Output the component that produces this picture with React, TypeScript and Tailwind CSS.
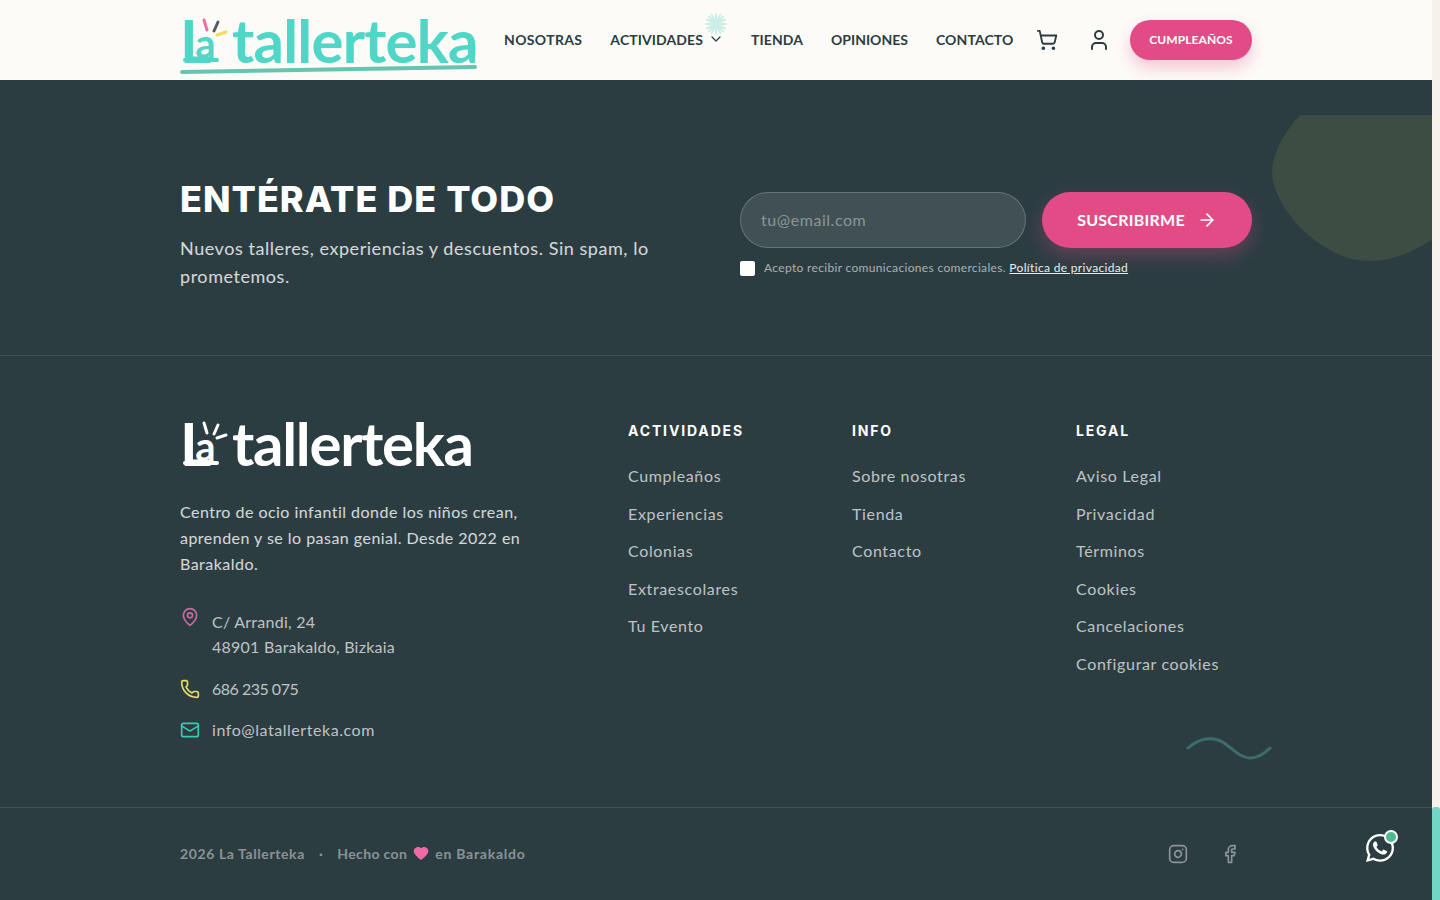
import { ArrowRight, ChevronDown, Facebook, Heart, Instagram, Mail, MapPin, Phone, ShoppingCart, User } from 'lucide-react'
import { FaWhatsapp } from 'react-icons/fa'

const navItems = ['NOSOTRAS', 'ACTIVIDADES', 'TIENDA', 'OPINIONES', 'CONTACTO']

const linkColumns = [
  { title: 'ACTIVIDADES', links: ['Cumpleaños', 'Experiencias', 'Colonias', 'Extraescolares', 'Tu Evento'] },
  { title: 'INFO', links: ['Sobre nosotras', 'Tienda', 'Contacto'] },
  { title: 'LEGAL', links: ['Aviso Legal', 'Privacidad', 'Términos', 'Cookies', 'Cancelaciones', 'Configurar cookies'] },
]

function Logo({ light }: { light?: boolean }) {
  const text = light ? 'text-white' : 'text-[#4fd6c6]'
  return (
    <div className={`relative flex h-[50px] w-[296px] items-start font-['Lato',sans-serif] font-bold ${text}`}>
      <span className="relative block h-[50px] w-[52px] shrink-0">
        <span className="mt-[-7px] flex items-baseline leading-[60px]">
          <span className="text-[60px] leading-[60px] tracking-[-17px]">L</span>
          <span className="relative top-[-5px] ml-[1px] text-[40px] leading-[40px]">a</span>
        </span>
        <span className={`absolute left-[3px] top-[41px] h-[4px] w-[36px] rounded-full ${light ? 'bg-white' : 'bg-[#4fd6c6]'}`} />
        <svg className="absolute left-0 top-0" width="52" height="24" viewBox="0 0 52 24" fill="none" strokeWidth="3" strokeLinecap="round">
          <path d="M24 3l3 10" stroke={light ? '#fff' : '#ee6fa5'} />
          <path d="M38 5l-4 9" stroke={light ? '#fff' : '#555e60'} />
          <path d="M37 18l9-3" stroke={light ? '#fff' : '#f3dc5d'} />
        </svg>
      </span>
      <span className={`mt-[-7px] text-[60px] leading-[60px] ${light ? 'tracking-[-1.3px]' : 'tracking-[-0.8px]'}`}>tallerteka</span>
      {!light && (
        <svg className="absolute left-0 top-[48px]" width="297" height="9" viewBox="0 0 297 9" fill="none">
          <path d="M2 7L295 2" stroke="#66c4b0" strokeWidth="4" strokeLinecap="round" />
        </svg>
      )}
    </div>
  )
}

export default function App() {
  return (
    <div className="flex h-[900px] w-full overflow-hidden bg-[#2c3d42] font-['Lato',sans-serif]">
      <div className="flex min-w-0 flex-1 flex-col">
        <header className="relative h-20 shrink-0 bg-[#fdfbf8]">
          <div className="mx-auto flex h-full w-[1072px] items-center">
            <div className="pt-[4px]">
              <Logo />
            </div>
            <nav className="ml-7 flex items-center gap-7 pb-[2px] text-[14px] font-bold tracking-[0.1px] text-[#2c3d42]">
              {navItems.map((item) => (
                <span key={item} className={`flex items-center ${item === 'NOSOTRAS' ? 'tracking-[0.35px]' : ''} ${item === 'OPINIONES' ? 'tracking-[0px]' : ''}`}>
                  {item}
                  {item === 'ACTIVIDADES' && <ChevronDown className="ml-[5px] mr-[-1px] h-4 w-4" strokeWidth={1.8} />}
                </span>
              ))}
            </nav>
            <ShoppingCart className="ml-[23px] h-[22px] w-[22px] text-[#2c3d42]" strokeWidth={2} />
            <User className="ml-[29px] h-6 w-6 text-[#2c3d42]" strokeWidth={2} />
            <button className="ml-auto h-10 w-[122px] rounded-full bg-[#e34b87] text-[12px] font-bold tracking-[0.1px] text-white shadow-[0_8px_16px_rgba(227,75,135,0.3)]">
              CUMPLEAÑOS
            </button>
          </div>
          <svg className="absolute left-[705px] top-[13px]" width="22" height="22" viewBox="0 0 22 22" stroke="#cdeee8" strokeWidth="2" strokeLinecap="round">
            <path d="M11 1v20M1 11h20M4 4l14 14M18 4L4 18M6.5 1.8l9 18.4M15.5 1.8l-9 18.4M1.8 6.5l18.4 9M20.2 6.5l-18.4 9" />
          </svg>
        </header>

        <div className="h-[35px] shrink-0" />

        <section className="relative shrink-0 overflow-hidden border-b border-white/10 py-16">
          <svg className="absolute right-0 top-0" width="160" height="146" viewBox="0 0 160 146">
            <path d="M28 0C10 20 0 40 0 58C2 95 50 146 98 146C125 146 150 132 160 124L160 0Z" fill="#3e4d44" />
          </svg>
          <div className="relative mx-auto grid w-[1072px] grid-cols-2 items-center gap-12">
            <div className="pb-[1px]">
              <h2 className="font-['Inter',sans-serif] text-[36px] font-extrabold leading-10 tracking-[1px] text-white">ENTÉRATE DE TODO</h2>
              <p className="mt-[15px] text-[18px] leading-7 tracking-[0.55px] text-white/80">
                Nuevos talleres, experiencias y descuentos. Sin spam, lo prometemos.
              </p>
            </div>
            <div className="pb-[1px]">
              <div className="flex gap-4">
                <div className="flex h-14 w-[286px] items-center rounded-full border border-white/20 bg-white/10 px-5 text-[16px] tracking-[0.55px] text-white/40">tu@email.com</div>
                <button className="flex h-14 w-[210px] items-center justify-center gap-3 rounded-full bg-[#e34b87] text-[16px] font-bold tracking-[0.25px] text-white shadow-[0_8px_18px_rgba(227,75,135,0.3)]">
                  SUSCRIBIRME
                  <ArrowRight className="h-5 w-5" strokeWidth={2} />
                </button>
              </div>
              <label className="mt-[11px] flex items-center gap-[9px] text-[12px] tracking-[0.33px] text-white/60">
                <span className="h-[15px] w-[15px] shrink-0 rounded-[2px] bg-white" />
                <span>
                  Acepto recibir comunicaciones comerciales. <span className="text-white/90 underline">Política de privacidad</span>
                </span>
              </label>
            </div>
          </div>
        </section>

        <section className="relative shrink-0 border-b border-white/10 pb-[65px] pt-16">
          <svg className="absolute right-[160px] top-[379px]" width="86" height="26" viewBox="0 0 86 26" fill="none">
            <path d="M2 13C12 4 22 2 32 5C44 9 50 22 64 23C72 23 78 19 84 13" stroke="#3c6d6b" strokeWidth="3" strokeLinecap="round" />
          </svg>
          <div className="mx-auto grid w-[1072px] grid-cols-5 gap-12">
            <div className="col-span-2">
              <Logo light />
              <p className="mt-[29px] text-[16px] leading-[26px] tracking-[0.47px] text-white/80">
                Centro de ocio infantil donde los niños crean, aprenden y se lo pasan genial. Desde 2022 en Barakaldo.
              </p>
              <div className="mt-[32px] flex flex-col gap-4 text-[16px] leading-[25px] text-white/70">
                <div className="mb-[1px] flex gap-3 tracking-[0.25px]">
                  <MapPin className="mt-[-2px] h-5 w-5 shrink-0 text-[#c76aa0]" strokeWidth={2} />
                  <span>
                    C/ Arrandi, 24
                    <br />
                    48901 Barakaldo, Bizkaia
                  </span>
                </div>
                <div className="flex items-center gap-3 tracking-[-0.5px]">
                  <Phone className="h-5 w-5 shrink-0 text-[#e8dc6c]" strokeWidth={2} />
                  <span>686 235 075</span>
                </div>
                <div className="flex items-center gap-3 tracking-[0.55px]">
                  <Mail className="h-5 w-5 shrink-0 text-[#3cc9b5]" strokeWidth={2} />
                  <span>info@latallerteka.com</span>
                </div>
              </div>
            </div>
            {linkColumns.map((column) => (
              <div key={column.title}>
                <h3 className="mb-[23px] mt-[1px] font-['Inter',sans-serif] text-[14px] font-bold leading-5 tracking-[1.85px] text-white">{column.title}</h3>
                <ul className="flex flex-col gap-[13.6px] text-[16px] leading-6 tracking-[0.65px] text-white/70">
                  {column.links.map((link) => (
                    <li key={link}>{link}</li>
                  ))}
                </ul>
              </div>
            ))}
          </div>
        </section>

        <div className="relative flex flex-1 items-center">
          <div className="mx-auto flex w-[1072px] items-center justify-between text-[14px] font-bold tracking-[0.6px] text-white/45">
            <div className="flex items-center pb-[2px]">
              <span>2026 La Tallerteka</span>
              <span className="mx-[14px]">·</span>
              <span className="tracking-[0.35px]">Hecho con</span>
              <Heart className="mx-[6px] h-4 w-4 fill-[#ef6aa6] text-[#ef6aa6]" />
              <span className="tracking-[0.75px]">en Barakaldo</span>
            </div>
            <div className="flex items-center gap-[32px] pr-[12px]">
              <Instagram className="h-5 w-5" strokeWidth={2} />
              <Facebook className="h-5 w-5" strokeWidth={2} />
            </div>
          </div>
          <div className="absolute left-[1364px] top-[24px] h-8 w-8 text-white">
            <FaWhatsapp className="h-8 w-8" />
            <span className="absolute right-[-2px] top-[-2px] h-[14px] w-[14px] rounded-full border-2 border-white bg-[#4fb98f]" />
          </div>
        </div>
      </div>
      <div className="flex h-full w-2 shrink-0 flex-col justify-end bg-[#f6f1ea]">
        <div className="h-[93px] rounded-t-[3px] bg-[#72d5c5]" />
      </div>
    </div>
  )
}
